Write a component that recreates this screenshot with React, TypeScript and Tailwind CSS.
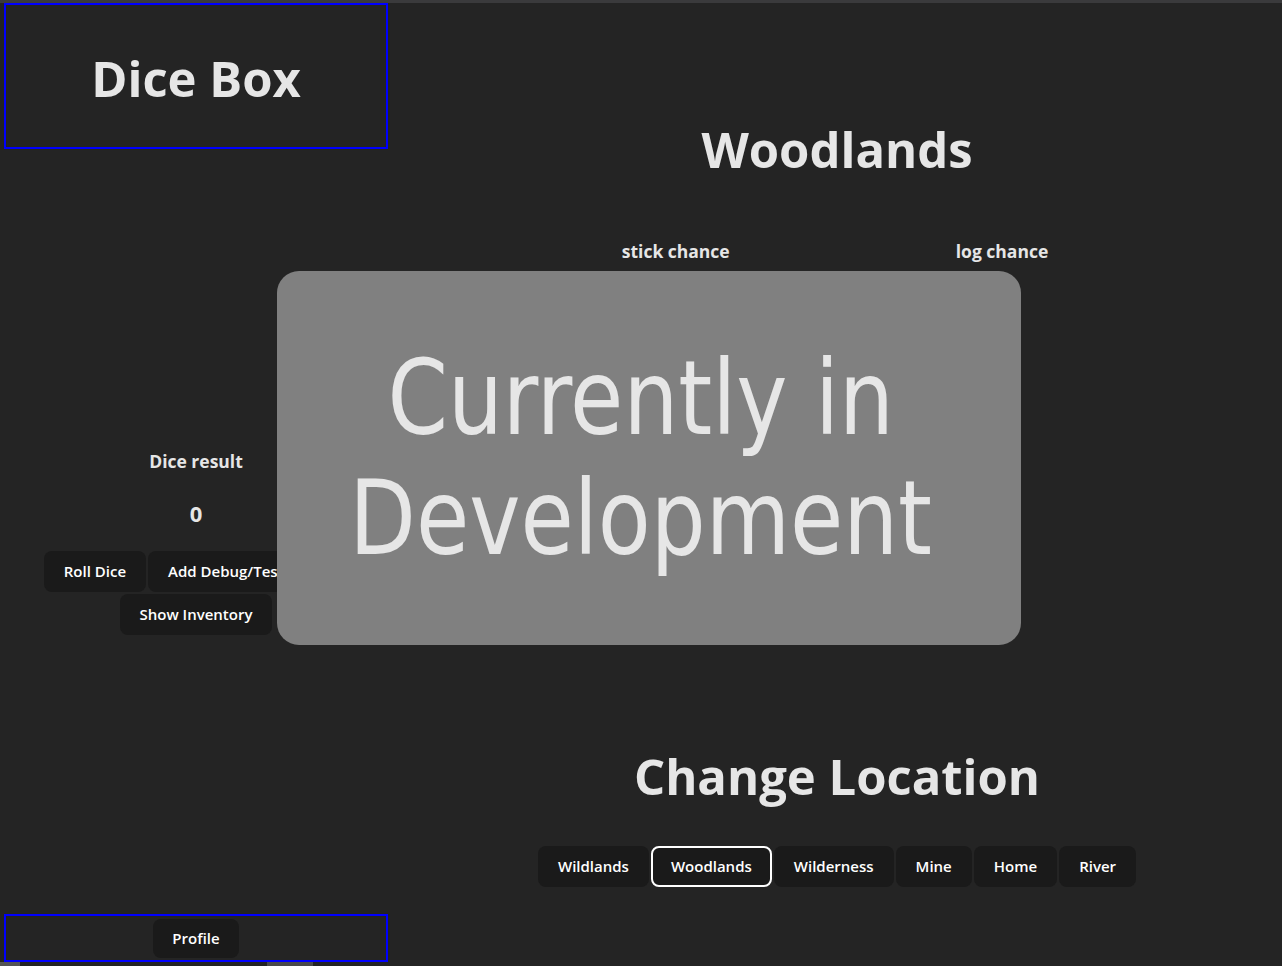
import React from 'react';

const locations = ['Wildlands', 'Woodlands', 'Wilderness', 'Mine', 'Home', 'River'];

const btn =
    "rounded-lg bg-[#1a1a1a] px-[18px] py-[8px] text-[15px] leading-[21px] font-semibold text-white border-2 border-transparent";

const App = () => {
    const current = 'Woodlands';

    return (
        <div className="relative h-[966px] w-full overflow-hidden bg-[#242424] text-[#e6e6e6] flex flex-col font-['Open_Sans','Noto_Sans',sans-serif]">
            <div className="h-[3px] w-full bg-[#3a3a3c]" />

            <div className="flex flex-1">
                {/* left panel */}
                <div className="w-[392px] pl-[4px] flex flex-col">
                    <div className="h-[146px] w-[384px] border-2 border-[#0000ff] flex items-center justify-center">
                        <h1 className="mt-[4px] text-[49px] font-bold leading-none">Dice Box</h1>
                    </div>

                    <div className="flex-1 w-[384px] flex flex-col items-center">
                        <h3 className="mt-[300px] text-[17.5px] font-bold leading-[25px]">Dice result</h3>
                        <h2 className="mt-[23px] text-[22px] font-bold leading-[32px]">0</h2>
                        <div className="mt-[22px] flex flex-wrap justify-center gap-[2px] w-[340px]">
                            <button className={btn}>Roll Dice</button>
                            <button className={btn}>Add Debug/Test Items</button>
                            <button className={btn}>Show Inventory</button>
                        </div>
                    </div>

                    <div className="h-[48px] w-[384px] border-2 border-[#0000ff] flex items-center justify-center">
                        <button className="rounded-lg bg-[#1a1a1a] px-[19px] py-[9px] text-[15px] leading-[21px] font-semibold text-white">Profile</button>
                    </div>
                </div>

                {/* right panel */}
                <div className="flex-1 flex flex-col items-center">
                    <h1 className="mt-[118px] text-[49px] font-bold leading-[56px]">Woodlands</h1>
                    <div className="mt-[62px] flex w-full justify-center gap-[226px] pr-[4px]">
                        <h3 className="text-[17.5px] font-bold leading-[25px]">stick chance</h3>
                        <h3 className="text-[17.5px] font-bold leading-[25px]">log chance</h3>
                    </div>

                    <h1 className="mt-[484px] text-[49px] font-bold leading-[56px]">Change Location</h1>
                    <div className="mt-[42px] flex gap-[2px]">
                        {locations.map((loc) => (
                            <button
                                key={loc}
                                className={
                                    loc === current
                                        ? "rounded-lg bg-[#1a1a1a] px-[18px] py-[8px] text-[15px] leading-[21px] font-semibold text-white border-2 border-white"
                                        : btn
                                }
                            >
                                {loc}
                            </button>
                        ))}
                    </div>
                </div>
            </div>

            <div className="h-[4px] w-full flex">
                <div className="w-[20px] bg-[#555]" />
                <div className="w-[247px]" />
                <div className="w-[46px] bg-[#4a4a4a]" />
            </div>

            {/* overlay */}
            <div className="absolute left-[277px] top-[271px] w-[744px] h-[374px] rounded-[22px] bg-[#808080] flex items-center justify-center">
                <p className="text-center text-[104px] leading-[120px] text-[#e6e6e6] pr-[18px] scale-x-[0.925] font-['DejaVu_Sans_Condensed','DejaVu_Sans',sans-serif]">
                    Currently in
                    <br />
                    Development
                </p>
            </div>
        </div>
    );
};

export default App;
